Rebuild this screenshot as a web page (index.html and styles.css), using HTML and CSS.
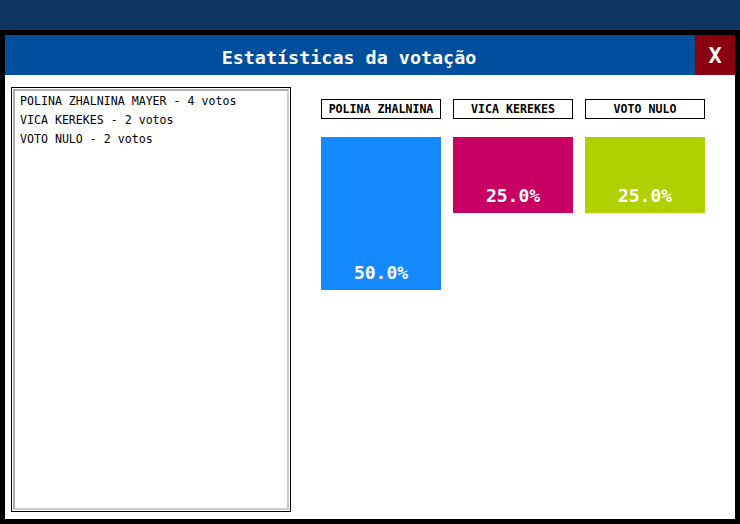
FILE: index.html
```
<!DOCTYPE html>
<html lang="pt">
<head>
<meta charset="utf-8">
<title>Estatísticas da votação</title>
<link rel="stylesheet" href="styles.css">
</head>
<body>
<div class="topbar"></div>
<div class="modal">
  <div class="modal-header">
    <h1 class="modal-title">Estatísticas da votação</h1>
    <button class="close-btn">X</button>
  </div>
  <div class="modal-body">
    <div class="results-panel">
      <div class="results-inner">
        <div class="result-line">POLINA ZHALNINA MAYER - 4 votos</div>
        <div class="result-line">VICA KEREKES - 2 votos</div>
        <div class="result-line">VOTO NULO - 2 votos</div>
      </div>
    </div>
    <div class="chart">
      <div class="chart-col">
        <div class="chart-label">POLINA ZHALNINA</div>
        <div class="bar bar-blue" style="height:153px"><span class="bar-value">50.0%</span></div>
      </div>
      <div class="chart-col">
        <div class="chart-label">VICA KEREKES</div>
        <div class="bar bar-magenta" style="height:76px"><span class="bar-value">25.0%</span></div>
      </div>
      <div class="chart-col">
        <div class="chart-label">VOTO NULO</div>
        <div class="bar bar-green" style="height:76px"><span class="bar-value">25.0%</span></div>
      </div>
    </div>
  </div>
</div>
</body>
</html>
```

FILE: styles.css
```
html, body {
  margin: 0;
  padding: 0;
}
body {
  background: #000;
  width: 740px;
  height: 524px;
  overflow: hidden;
  font-family: "DejaVu Sans Mono", "Liberation Mono", monospace;
}
.topbar {
  height: 30px;
  background: #0f3660;
}
.modal {
  margin: 5px 5px 0 5px;
  width: 730px;
  height: 484px;
  background: #fff;
  display: flex;
  flex-direction: column;
}
.modal-header {
  height: 40px;
  background: #024f9e;
  display: flex;
  align-items: center;
}
.modal-title {
  flex: 1;
  margin: 0;
  text-align: center;
  color: #fff;
  font-size: 18.4px;
  font-weight: bold;
  padding-top: 4px;
  padding-right: 2px;
}
.close-btn {
  width: 40px;
  height: 40px;
  border: 0;
  padding: 0;
  margin: 0;
  background: #8b0010;
  color: #fff;
  font-family: "DejaVu Sans Mono", monospace;
  font-weight: bold;
  font-size: 22px;
}
.modal-body {
  flex: 1;
  display: flex;
  padding: 12px 6px 7px 6px;
}
.results-panel {
  width: 276px;
  border: 1px solid #000;
  padding: 1px;
  display: flex;
}
.results-inner {
  flex: 1;
  border: 2px solid;
  border-color: #a9adb5 #c8ccd2 #c8ccd2 #a9adb5;
  padding: 1px 5px;
}
.result-line {
  font-size: 11.6px;
  line-height: 19px;
  color: #000;
}
.chart {
  display: flex;
  align-items: flex-start;
  gap: 12px;
  margin-left: 30px;
  padding-top: 12px;
}
.chart-col {
  width: 120px;
  display: flex;
  flex-direction: column;
}
.chart-label {
  height: 18px;
  border: 1px solid #000;
  font-size: 11.6px;
  font-weight: bold;
  line-height: 18px;
  text-align: center;
  color: #000;
  margin-bottom: 18px;
}
.bar {
  display: flex;
  align-items: flex-end;
  justify-content: center;
}
.bar-blue { background: #1589ff; }
.bar-magenta { background: #c80064; }
.bar-green { background: #b0d000; }
.bar-value {
  color: #fff;
  font-size: 18px;
  font-weight: bold;
  line-height: 18px;
  margin-bottom: 8px;
}
```
